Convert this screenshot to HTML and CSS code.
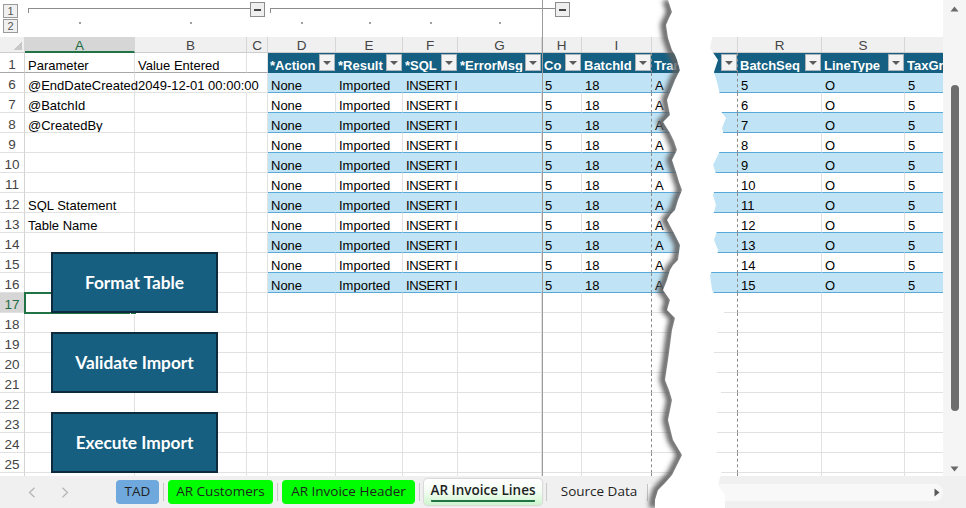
FILE: index.html
```html
<!DOCTYPE html>
<html>
<head>
<meta charset="utf-8">
<link rel="stylesheet" href="styles.css">
</head>
<body>
<div class="app">
  <div class="main">
    <div class="sheet">
      <div class="ol1">
        <div class="lv1"><span class="lvb">1</span></div>
        <div class="br br1"></div>
        <div class="mb"><i></i></div>
        <div class="br br2"></div>
        <div class="mb"><i></i></div>
      </div>
      <div class="ol2">
        <div class="lv2"><span class="lvb">2</span></div>
        <div class="d"></div><div class="d"></div><div></div>
        <div class="d"></div><div class="d"></div><div class="d"></div><div class="d"></div>
      </div>
      <div class="grid">
        <div class="r ch"><span class="corner"></span><span class="sel">A</span><span>B</span><span>C</span><span>D</span><span>E</span><span>F</span><span>G</span><span>H</span><span>I</span><span></span><span>R</span><span>S</span><span></span></div>
        <div class="r r1"><span class="rh">1</span><span>Parameter</span><span>Value Entered</span><span></span><span class="th"><b>*Action</b><i class="dd"></i></span><span class="th"><b>*Result</b><i class="dd"></i></span><span class="th"><b>*SQL</b><i class="dd"></i></span><span class="th"><b>*ErrorMsg</b><i class="dd"></i></span><span class="th"><b>Co</b><i class="dd"></i></span><span class="th"><b>BatchId</b><i class="dd"></i></span><span class="th"><b>TranType</b><i class="dd"></i></span><span class="th"><b>BatchSeq</b><i class="dd"></i></span><span class="th"><b>LineType</b><i class="dd"></i></span><span class="th"><b>TaxGroup</b><i class="dd"></i></span></div>
        <div class="r tb"><span class="rh">6</span><span class="ov">@EndDateCreated</span><span class="ov nb">2049-12-01 00:00:00</span><span></span><span>None</span><span>Imported</span><span class="ins">INSERT INTO</span><span></span><span>5</span><span>18</span><span>A</span><span>5</span><span>O</span><span>5</span></div>
        <div class="r tw"><span class="rh">7</span><span>@BatchId</span><span></span><span></span><span>None</span><span>Imported</span><span class="ins">INSERT INTO</span><span></span><span>5</span><span>18</span><span>A</span><span>6</span><span>O</span><span>5</span></div>
        <div class="r tb"><span class="rh">8</span><span>@CreatedBy</span><span></span><span></span><span>None</span><span>Imported</span><span class="ins">INSERT INTO</span><span></span><span>5</span><span>18</span><span>A</span><span>7</span><span>O</span><span>5</span></div>
        <div class="r tw"><span class="rh">9</span><span></span><span></span><span></span><span>None</span><span>Imported</span><span class="ins">INSERT INTO</span><span></span><span>5</span><span>18</span><span>A</span><span>8</span><span>O</span><span>5</span></div>
        <div class="r tb"><span class="rh">10</span><span></span><span></span><span></span><span>None</span><span>Imported</span><span class="ins">INSERT INTO</span><span></span><span>5</span><span>18</span><span>A</span><span>9</span><span>O</span><span>5</span></div>
        <div class="r tw"><span class="rh">11</span><span></span><span></span><span></span><span>None</span><span>Imported</span><span class="ins">INSERT INTO</span><span></span><span>5</span><span>18</span><span>A</span><span>10</span><span>O</span><span>5</span></div>
        <div class="r tb"><span class="rh">12</span><span>SQL Statement</span><span></span><span></span><span>None</span><span>Imported</span><span class="ins">INSERT INTO</span><span></span><span>5</span><span>18</span><span>A</span><span>11</span><span>O</span><span>5</span></div>
        <div class="r tw"><span class="rh">13</span><span>Table Name</span><span></span><span></span><span>None</span><span>Imported</span><span class="ins">INSERT INTO</span><span></span><span>5</span><span>18</span><span>A</span><span>12</span><span>O</span><span>5</span></div>
        <div class="r tb"><span class="rh">14</span><span></span><span></span><span></span><span>None</span><span>Imported</span><span class="ins">INSERT INTO</span><span></span><span>5</span><span>18</span><span>A</span><span>13</span><span>O</span><span>5</span></div>
        <div class="r tw"><span class="rh">15</span><span></span><span></span><span></span><span>None</span><span>Imported</span><span class="ins">INSERT INTO</span><span></span><span>5</span><span>18</span><span>A</span><span>14</span><span>O</span><span>5</span></div>
        <div class="r tb"><span class="rh">16</span><span></span><span></span><span></span><span>None</span><span>Imported</span><span class="ins">INSERT INTO</span><span></span><span>5</span><span>18</span><span>A</span><span>15</span><span>O</span><span>5</span></div>
        <div class="r"><span class="rh sel">17</span><span class="act"></span><span></span><span></span><span></span><span></span><span></span><span></span><span></span><span></span><span></span><span></span><span></span><span></span></div>
        <div class="r"><span class="rh">18</span><span></span><span></span><span></span><span></span><span></span><span></span><span></span><span></span><span></span><span></span><span></span><span></span><span></span></div>
        <div class="r"><span class="rh">19</span><span></span><span></span><span></span><span></span><span></span><span></span><span></span><span></span><span></span><span></span><span></span><span></span><span></span></div>
        <div class="r"><span class="rh">20</span><span></span><span></span><span></span><span></span><span></span><span></span><span></span><span></span><span></span><span></span><span></span><span></span><span></span></div>
        <div class="r"><span class="rh">21</span><span></span><span></span><span></span><span></span><span></span><span></span><span></span><span></span><span></span><span></span><span></span><span></span><span></span></div>
        <div class="r"><span class="rh">22</span><span></span><span></span><span></span><span></span><span></span><span></span><span></span><span></span><span></span><span></span><span></span><span></span><span></span></div>
        <div class="r"><span class="rh">23</span><span></span><span></span><span></span><span></span><span></span><span></span><span></span><span></span><span></span><span></span><span></span><span></span><span></span></div>
        <div class="r"><span class="rh">24</span><span></span><span></span><span></span><span></span><span></span><span></span><span></span><span></span><span></span><span></span><span></span><span></span><span></span></div>
        <div class="r"><span class="rh">25</span><span></span><span></span><span></span><span></span><span></span><span></span><span></span><span></span><span></span><span></span><span></span><span></span><span></span></div>
        <div class="r"><span class="rh">26</span><span></span><span></span><span></span><span></span><span></span><span></span><span></span><span></span><span></span><span></span><span></span><span></span><span></span></div>
      </div>
      <div class="freeze"></div>
      <div class="shapes">
        <div class="btn">Format Table</div>
        <div class="btn">Validate Import</div>
        <div class="btn">Execute Import</div>
      </div>
    </div>
    <div class="vscroll">
      <svg class="vup" width="9" height="6" viewBox="0 0 9 6"><path d="M0.5 5.5 L4.5 0.5 L8.5 5.5 Z" fill="#6a6a6a"/></svg>
      <div class="thumb"></div>
      <div class="fill"></div>
      <svg class="vdown" width="9" height="6" viewBox="0 0 9 6"><path d="M0.5 0.5 L4.5 5.5 L8.5 0.5 Z" fill="#6a6a6a"/></svg>
    </div>
  </div>
  <div class="tabbar">
    <div class="nav">
      <svg width="8" height="11" viewBox="0 0 8 11"><path d="M6.5 0.8 L1.5 5.5 L6.5 10.2" fill="none" stroke="#b3b3b3" stroke-width="1.2"/></svg>
      <svg width="8" height="11" viewBox="0 0 8 11"><path d="M1.5 0.8 L6.5 5.5 L1.5 10.2" fill="none" stroke="#b3b3b3" stroke-width="1.2"/></svg>
    </div>
    <div class="tab t-tad">TAD</div>
    <span class="sep"></span>
    <div class="tab t-lime t-cust">AR Customers</div>
    <span class="sep"></span>
    <div class="tab t-lime t-head">AR Invoice Header</div>
    <span class="sep"></span>
    <div class="tab t-active"><span class="u">AR Invoice Lines</span></div>
    <span class="sep"></span>
    <div class="tab t-src">Source Data</div>
    <span class="sep2"></span>
    <div class="hscroll">
      <svg width="6" height="9" viewBox="0 0 6 9"><path d="M0.5 0.5 L5.5 4.5 L0.5 8.5 Z" fill="#5a5a5a"/></svg>
    </div>
  </div>
  <svg class="tear" width="966" height="508" viewBox="0 0 966 508">
    <defs>
      <filter id="sh" x="-100%" y="-5%" width="300%" height="110%">
        <feGaussianBlur stdDeviation="2.4"/>
      </filter>
    </defs>
    <polyline transform="translate(-2 0)" filter="url(#sh)" fill="none" stroke="#5e5e5e" stroke-width="7" points="668,0 672,12 666,25 668,38 672,50 677,60 680,70 675,80 667,100 670,115 663,122 670,133 677,150 672,160 677,175 682,190 678,200 675,210 667,220 675,235 680,245 678,260 670,270 667,280 663,290 670,300 667,310 675,318 672,330 668,360 665,380 672,400 668,420 673,440 682,455 677,465 672,475 658,490 655,500 655,508"/>
    <polygon fill="#ffffff" points="668,0 672,12 669,18 666,25 668,38 672,50 675,55 677,60 680,70 678,74 675,80 671,90 667,100 670,115 663,122 670,133 674,141 677,150 672,160 677,175 679,182 682,190 678,200 675,210 671,214 667,220 675,235 680,245 678,260 673,265 670,270 667,280 663,290 670,300 667,310 675,318 672,330 670,345 668,360 665,380 669,390 672,400 668,420 673,440 682,455 677,465 672,475 665,483 658,490 655,500 655,508 725,508 725,495 718,485 722,470 716,455 720,440 714,425 718,410 722,395 715,380 719,365 713,350 717,335 721,320 725,310 718,300 712,290 710,275 716,262 718,250 714,240 718,228 713,215 716,205 713,195 718,180 713,165 718,155 725,140 722,128 726,118 716,105 720,95 717,82 714,72 718,60 710,48 712,38 706,25 710,10 708,0"/>
  </svg>
</div>
</body>
</html>
```
FILE: styles.css
```css
:root {
  --cols: 25px 110px 112px 21px 68px 67px 55px 84px 40px 70px 86px 84px 83px 80px;
  --grid: #e1e1e1;
  --teal: #156082;
  --band: #c0e4f5;
  --tline: #5aa8d8;
}
html, body { margin: 0; padding: 0; }
body {
  font-family: "Liberation Sans", Arial, sans-serif;
  font-size: 13px;
  color: #000;
  background: #fff;
}
.app {
  position: relative;
  width: 966px;
  height: 508px;
  overflow: hidden;
  display: flex;
  flex-direction: column;
  background: #fff;
}
.main { display: flex; height: 476px; flex: none; }
.sheet {
  position: relative;
  width: 943px;
  overflow: hidden;
  display: flex;
  flex-direction: column;
  background: #fff;
}
.sheet > .ol1, .sheet > .ol2, .sheet > .grid { flex: none; }

/* outline bar */
.ol1, .ol2, .r {
  display: grid;
  grid-template-columns: var(--cols);
}
.ol1 { height: 17px; }
.ol2 { height: 20px; }
.lv1 { padding: 4px 0 0 3px; }
.lv2 { padding: 2px 0 0 3px; }
.lvb {
  display: block;
  width: 15px;
  height: 14px;
  box-sizing: border-box;
  border: 1px solid #9a9a9a;
  background: #f0f0f0;
  font-size: 11px;
  line-height: 12px;
  text-align: center;
  color: #555;
}
.br {
  margin-top: 8px;
  height: 4px;
  border-top: 1px solid #8c8c8c;
  border-left: 1px solid #8c8c8c;
}
.br1 { grid-column: 2 / 4; margin-left: 3px; margin-right: -3px; }
.br2 { grid-column: 5 / 9; margin-left: 2px; margin-right: -13px; }
.mb {
  justify-self: center;
  margin-top: 2px;
  width: 15px;
  height: 15px;
  box-sizing: border-box;
  border: 1px solid #8c8c8c;
  background: #efefef;
  display: flex;
  align-items: center;
  justify-content: center;
}
.mb i { display: block; width: 7px; height: 2px; background: #454545; }
.d { display: flex; justify-content: center; }
.d::after {
  content: "";
  width: 2px;
  height: 2px;
  margin-top: 5px;
  background: #a0a0a0;
}

/* grid */
.grid { display: flex; flex-direction: column; }
.r { height: 20px; flex: none; }
.r > span {
  box-sizing: border-box;
  min-width: 0;
  border-right: 1px solid var(--grid);
  border-bottom: 1px solid var(--grid);
  padding: 6px 0 0 3px;
  line-height: 13px;
  white-space: nowrap;
  overflow: hidden;
}
.r > .ins { letter-spacing: -0.35px; }
.r > .rh {
  padding: 5px 0 0;
  text-align: center;
  font-size: 13.5px;
  color: #444;
  border-right-color: #d4d4d4;
}
.r > .rh.sel { background: #d6d6d6; color: #1e6b41; }
.ch { height: 16px; background: #f0f0f0; }
.ch > span {
  padding: 2px 0 0;
  line-height: 13px;
  text-align: center;
  font-size: 13.5px;
  color: #444;
  border-right-color: #d6d6d6;
  border-bottom-color: #cdcdcd;
}
.ch > .sel {
  background: #d6d6d6;
  color: #1e6b41;
  border-bottom: 2px solid #217346;
}
.ch > .corner {
  background: linear-gradient(135deg, transparent 50%, #c8c8c8 50%) no-repeat right 2px bottom 2px / 9px 9px;
}
.r1 > span { border-bottom-color: #a8a8a8; }
.r > .ov { overflow: visible; position: relative; z-index: 1; }
.r > .nb { border-right-color: transparent; }

/* table */
.r1 > .th {
  display: flex;
  padding: 0 0 0 2px;
  background: var(--teal);
  color: #fff;
  border-right-color: var(--teal);
  border-bottom-color: var(--teal);
}
.th b {
  flex: 1;
  min-width: 0;
  overflow: hidden;
  padding-top: 6px;
  line-height: 13px;
  font-weight: bold;
}
.th .dd {
  flex: none;
  width: 16px;
  height: 17px;
  margin-top: 1px;
  box-sizing: border-box;
  background: #f3f3f3;
  border: 1px solid #a9b4ba;
  display: flex;
  align-items: center;
  justify-content: center;
}
.th .dd::after {
  content: "";
  width: 0;
  height: 0;
  border-left: 4px solid transparent;
  border-right: 4px solid transparent;
  border-top: 4px solid #5c5c5c;
}
.tb > span:nth-child(n+5) {
  background: var(--band);
  border-right-color: var(--band);
  border-bottom-color: var(--tline);
}
.tw > span:nth-child(n+5) { border-bottom-color: var(--tline); }
.r:not(.ch) > span:nth-child(10),
.r:not(.ch) > span:nth-child(11) { border-right: 1px dashed #8a8a8a; }

/* active cell */
.r > .act {
  overflow: visible;
  position: relative;
  z-index: 1;
  outline: 2px solid #217346;
  outline-offset: -1px;
}
.r > .act::after {
  content: "";
  position: absolute;
  right: -3px;
  bottom: -3px;
  width: 5px;
  height: 5px;
  background: #217346;
  border: 1px solid #fff;
}

.freeze {
  position: absolute;
  left: 542px;
  top: 0;
  bottom: 0;
  width: 1px;
  background: #9c9c9c;
  z-index: 2;
}

/* shapes */
.shapes {
  position: absolute;
  left: 51px;
  top: 252px;
  display: flex;
  flex-direction: column;
  gap: 19px;
  z-index: 3;
}
.btn {
  width: 167px;
  height: 61px;
  box-sizing: border-box;
  background: #175f81;
  border: 2px solid #0e2a3d;
  color: #fff;
  font-family: Lato, "Open Sans", sans-serif;
  font-weight: 700;
  font-size: 17.3px;
  display: flex;
  align-items: center;
  justify-content: center;
}

/* vertical scrollbar */
.vscroll {
  width: 23px;
  background: #f5f5f5;
  display: flex;
  flex-direction: column;
  align-items: center;
}
.vup { margin-top: 6px; flex: none; }
.thumb {
  flex: none;
  margin-top: 73px;
  width: 8px;
  height: 326px;
  border-radius: 4px;
  background: #6e6e6e;
}
.fill { flex: 1; }
.vdown { margin-bottom: 4px; flex: none; }

/* tab bar */
.tabbar {
  height: 32px;
  flex: none;
  background: #f0f0f0;
  display: flex;
  align-items: center;
  font-family: "Open Sans", "Noto Sans", sans-serif;
  font-size: 13.5px;
  color: #1f1f1f;
}
.nav {
  width: 116px;
  box-sizing: border-box;
  padding-left: 28px;
  display: flex;
  gap: 25px;
  align-items: center;
}
.tab {
  height: 24px;
  line-height: 23px;
  border-radius: 4px;
  text-align: center;
  white-space: nowrap;
  box-sizing: border-box;
}
.t-tad { width: 43px; background: #6fa8dc; }
.t-lime { background: #00ff00; }
.t-cust { width: 105px; }
.t-head { width: 133px; }
.t-active {
  width: 118px;
  height: 26px;
  line-height: 22px;
  font-weight: 600;
  background: linear-gradient(#ffffff 0%, #f4fdf4 45%, #cdf6cd 100%);
  box-shadow: 0 0 2px rgba(0, 0, 0, 0.35);
}
.t-active .u {
  display: inline-block;
  line-height: 20px;
  border-bottom: 2px solid #217346;
  border-radius: 1px;
}
.t-src { width: 96px; }
.sep {
  width: 1px;
  height: 18px;
  margin: 0 4px;
  background: #c8c8c8;
}
.sep2 {
  width: 1px;
  height: 17px;
  background: #c4c4c4;
}
.hscroll {
  flex: 1;
  height: 17px;
  margin-right: 23px;
  border-radius: 0 8px 8px 0;
  background: #f8f8f8;
  display: flex;
  align-items: center;
  justify-content: flex-end;
  padding-right: 3px;
}

/* torn paper overlay */
.tear {
  position: absolute;
  left: 0;
  top: 0;
  z-index: 10;
  pointer-events: none;
}
```
